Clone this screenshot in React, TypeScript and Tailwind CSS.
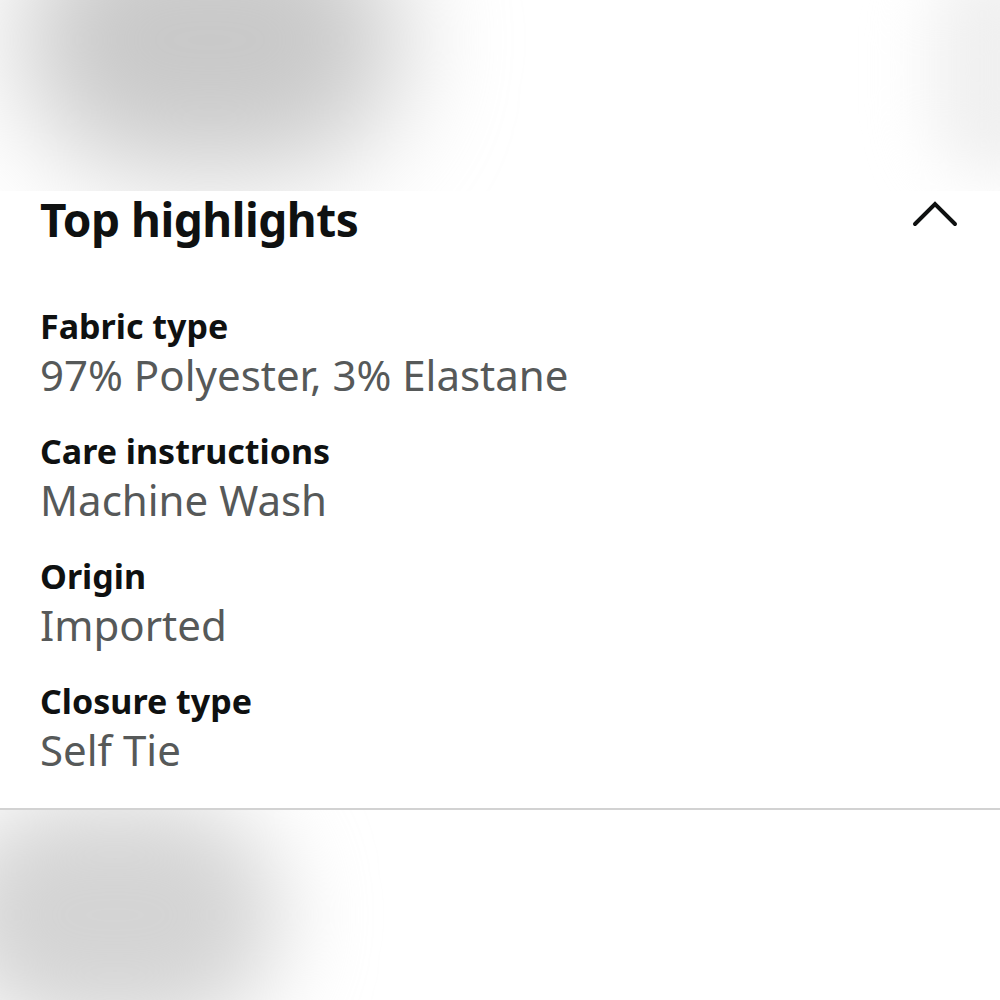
const highlights = [
  { label: "Fabric type", value: "97% Polyester, 3% Elastane" },
  { label: "Care instructions", value: "Machine Wash" },
  { label: "Origin", value: "Imported" },
  { label: "Closure type", value: "Self Tie" },
];

export default function App() {
  return (
    <div className="relative w-full h-[1000px] bg-white overflow-hidden font-['Noto_Sans',sans-serif]">
      {/* blurred backdrop */}
      <div className="absolute left-[20px] -top-[90px] w-[380px] h-[260px] rounded-full bg-[#c9c9c9] blur-[55px] pointer-events-none" />
      <div className="absolute left-[930px] -top-[40px] w-[140px] h-[220px] rounded-full bg-[#f0f0f0] blur-[30px] pointer-events-none" />
      <div className="absolute -left-[50px] top-[800px] w-[330px] h-[230px] rounded-full bg-[#d4d4d4] blur-[45px] pointer-events-none" />

      <div className="relative z-10 flex flex-col pt-[191px]">
        <section className="bg-white border-b-2 border-[#d2d2d2] px-10 pb-[32px]">
          <div className="flex items-center justify-between h-[56px]">
            <h2 className="text-[46px] font-bold text-[#0f1111] tracking-[-0.5px] leading-none">
              Top highlights
            </h2>
            <svg width="46" height="28" viewBox="0 0 46 28" className="mr-[2px] mt-[-10px]">
              <polyline
                points="3,24 23,4 43,24"
                fill="none"
                stroke="#0f1111"
                strokeWidth="4"
                strokeLinecap="round"
                strokeLinejoin="miter"
              />
            </svg>
          </div>

          <div className="flex flex-col gap-[27px] pt-[56px]">
            {highlights.map((h) => (
              <div key={h.label} className="flex flex-col">
                <div className="text-[34px] font-bold text-[#0f1111] leading-[46px]">{h.label}</div>
                <div className="text-[42px] text-[#565959] leading-[52px]">{h.value}</div>
              </div>
            ))}
          </div>
        </section>
      </div>
    </div>
  );
}
